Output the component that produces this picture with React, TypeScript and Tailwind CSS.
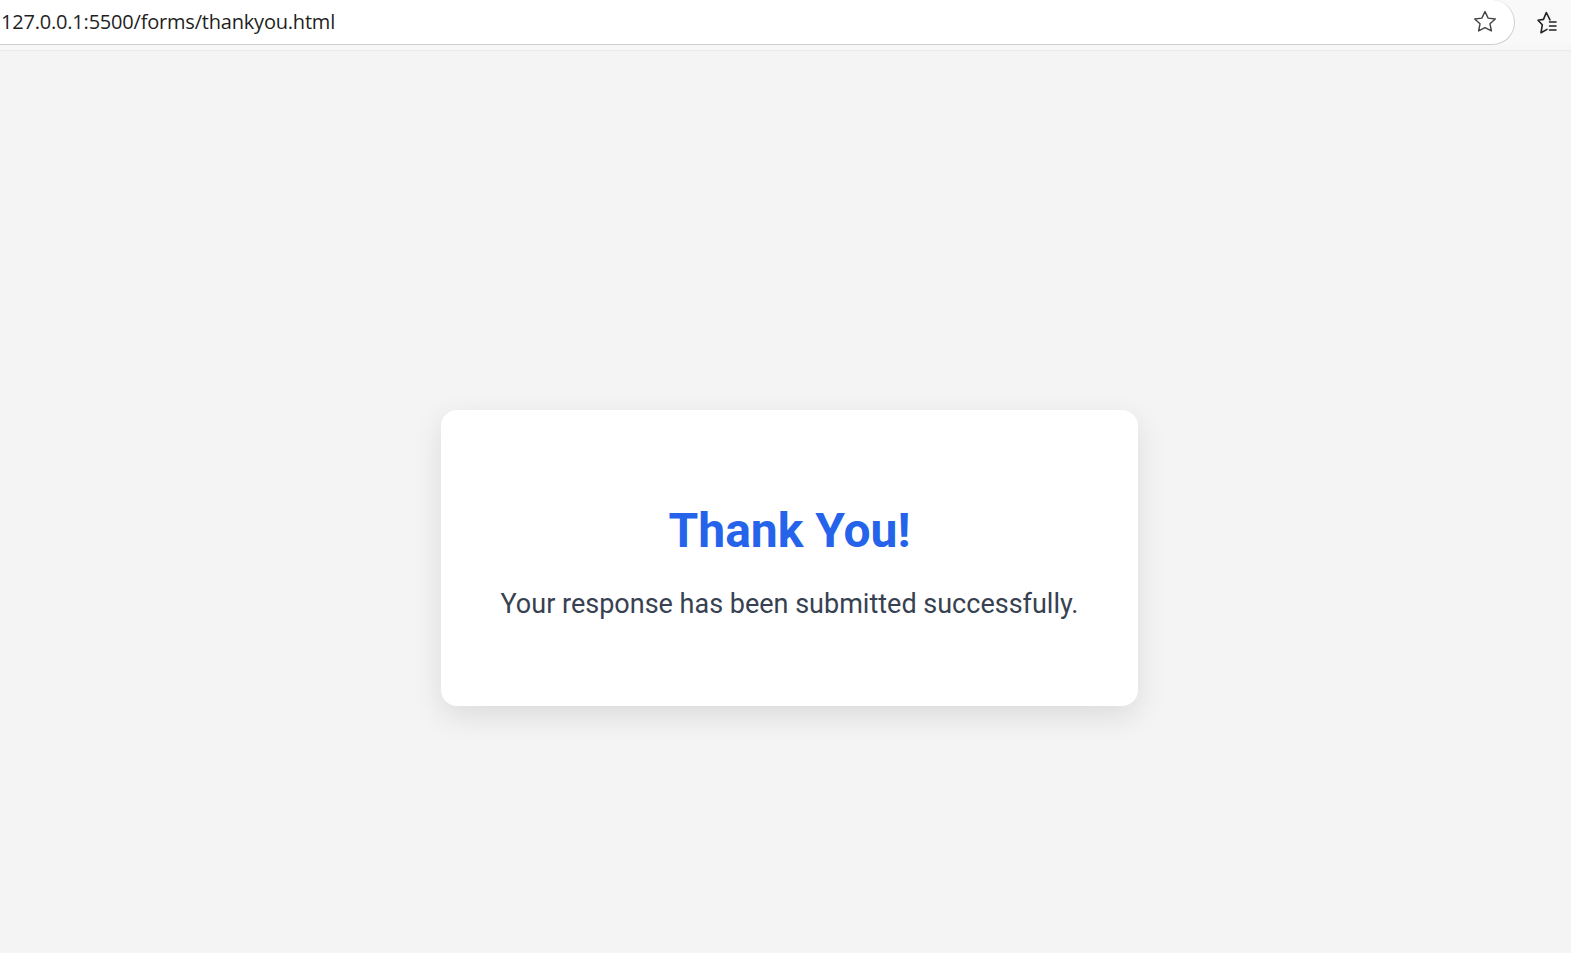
export default function App() {
  return (
    <div className="flex min-h-screen flex-col bg-[#f4f4f4] font-['Roboto',sans-serif]">
      {/* browser chrome */}
      <div className="flex h-[45px] bg-[#f9f9f9]">
        <div className="flex flex-1 items-center justify-between rounded-r-[24px] border-r border-b border-[#cfcfcf] bg-white pr-[16px]">
          <span className="pl-[1px] font-['Open_Sans',sans-serif] text-[20px] tracking-[-0.2px] text-[#1f1f1f]">
            127.0.0.1:5500/forms/thankyou.html
          </span>
          <svg width="26" height="26" viewBox="0 0 24 24" fill="none" stroke="#444" strokeWidth="1.3" strokeLinejoin="round">
            <path d="M12 2.4l2.9 6 6.6.8-4.9 4.5 1.3 6.6L12 17.1l-5.9 3.2 1.3-6.6-4.9-4.5 6.6-.8z" />
          </svg>
        </div>
        <div className="flex w-[56px] items-center pl-[22px]">
          <svg width="20" height="26" viewBox="0 0 20 26" fill="none" stroke="#222" strokeWidth="1.6" strokeLinejoin="round" strokeLinecap="round">
            <path d="M13 9.8L9.3 2.5 6.5 9.4 1 10.2l4.3 4.6-1.3 8 6-3.4" />
            <path d="M12.5 12h6.5M12.5 16h6.5M12.5 20h6.5" />
          </svg>
        </div>
      </div>
      <div className="h-[6px] border-b border-[#ebebeb] bg-[#f7f7f7]" />

      <main className="flex flex-1 justify-center pt-[359px] pl-[8px]">
        <div className="flex h-[296px] w-[697px] flex-col items-center justify-center rounded-2xl bg-white pt-[8px] shadow-[0_10px_30px_rgba(0,0,0,0.1)]">
          <h1 className="text-[48px] leading-none font-bold text-[#2563eb]">Thank You!</h1>
          <p className="mt-[36px] text-[27px] leading-none text-[#374151]">
            Your response has been submitted successfully.
          </p>
        </div>
      </main>
    </div>
  );
}
